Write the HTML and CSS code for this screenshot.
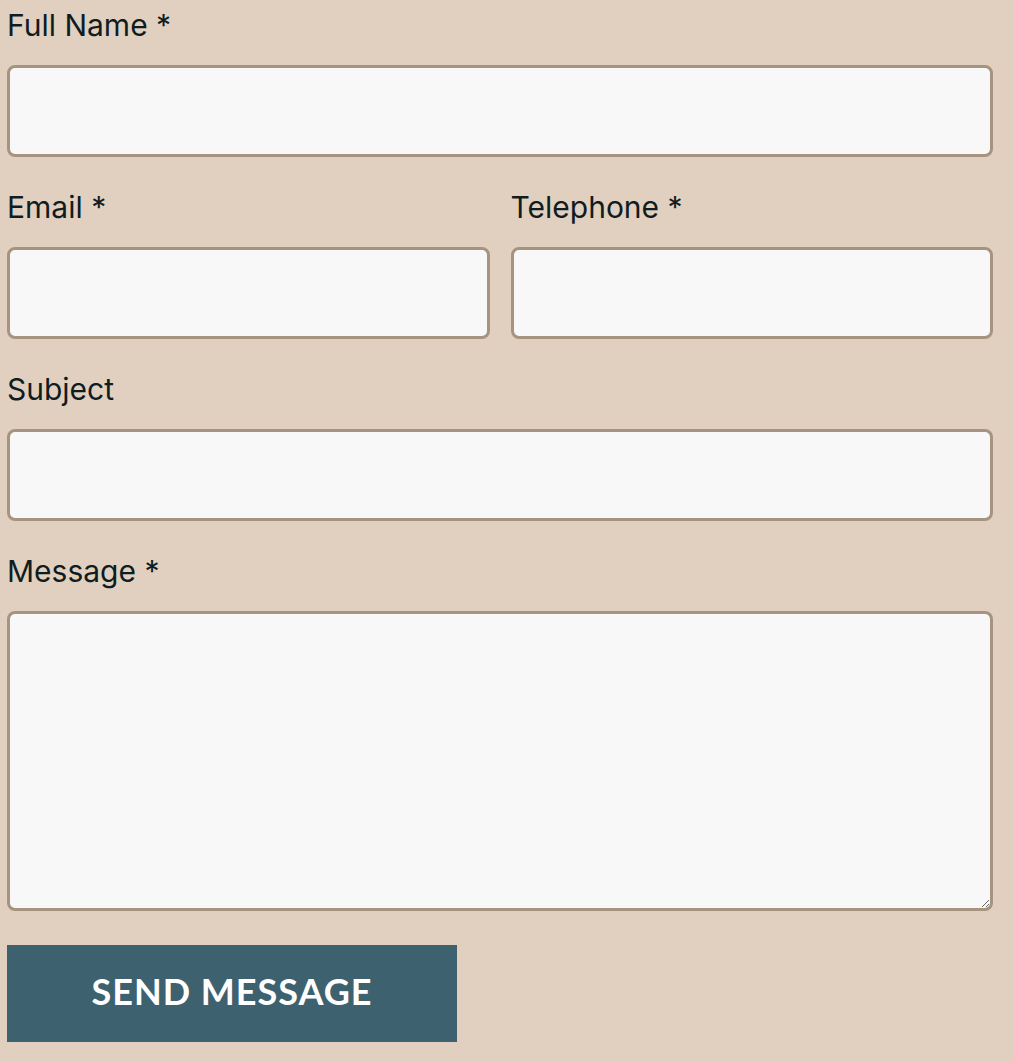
FILE: index.html
```html
<!DOCTYPE html>
<html lang="en">
  <head>
    <meta charset="UTF-8" />
    <meta name="viewport" content="width=device-width, initial-scale=1.0" />
    <title>Contact</title>
    <link rel="stylesheet" href="styles.css">
  </head>
  <body>
    <form class="contact-form">
      <div class="form-group">
        <label for="fullname">Full Name *</label>
        <input type="text" id="fullname" name="fullname" required />
      </div>

      <div class="form-row">
        <div class="form-group">
          <label for="email">Email *</label>
          <input type="email" id="email" name="email" required />
        </div>
        <div class="form-group">
          <label for="phone">Telephone *</label>
          <input type="tel" id="phone" name="phone" required />
        </div>
      </div>

      <div class="form-group">
        <label for="subject">Subject</label>
        <input type="text" id="subject" name="subject" />
      </div>

      <div class="form-group">
        <label for="message">Message *</label>
        <textarea id="message" name="message" required></textarea>
      </div>

      <button type="submit">SEND MESSAGE</button>
    </form>
  </body>
</html>
```

FILE: styles.css
```css
body {
  margin: 0;
  padding: 0;
  background-color: #e1d0bf;
  color: #0f1c21;
  font-family: "Inter", "Liberation Sans", sans-serif;
}
.contact-form {
  width: 986px;
  padding: 0 0 0 7px;
}
.form-row {
  display: flex;
  gap: 21px;
}
.form-row .form-group {
  flex: 1;
}
.form-group {
  margin-bottom: 25px;
}
label {
  display: block;
  font-size: 30px;
  line-height: 50px;
  margin-bottom: 15px;
}
input,
textarea {
  display: block;
  box-sizing: border-box;
  width: 100%;
  height: 92px;
  margin: 0;
  padding: 10px 16px;
  background: #f8f8f8;
  border: 3px solid #a69480;
  border-radius: 8px;
  font-size: 24px;
  font-family: inherit;
}
textarea {
  height: 300px;
  resize: vertical;
}
button {
  display: block;
  width: 450px;
  height: 97px;
  margin-top: 34px;
  padding: 0 0 5px;
  background: #3e6170;
  color: #fff;
  border: none;
  border-radius: 0;
  font-family: "Lato", "Open Sans", sans-serif;
  font-weight: 700;
  font-size: 36px;
  letter-spacing: 1px;
  cursor: pointer;
}
```
